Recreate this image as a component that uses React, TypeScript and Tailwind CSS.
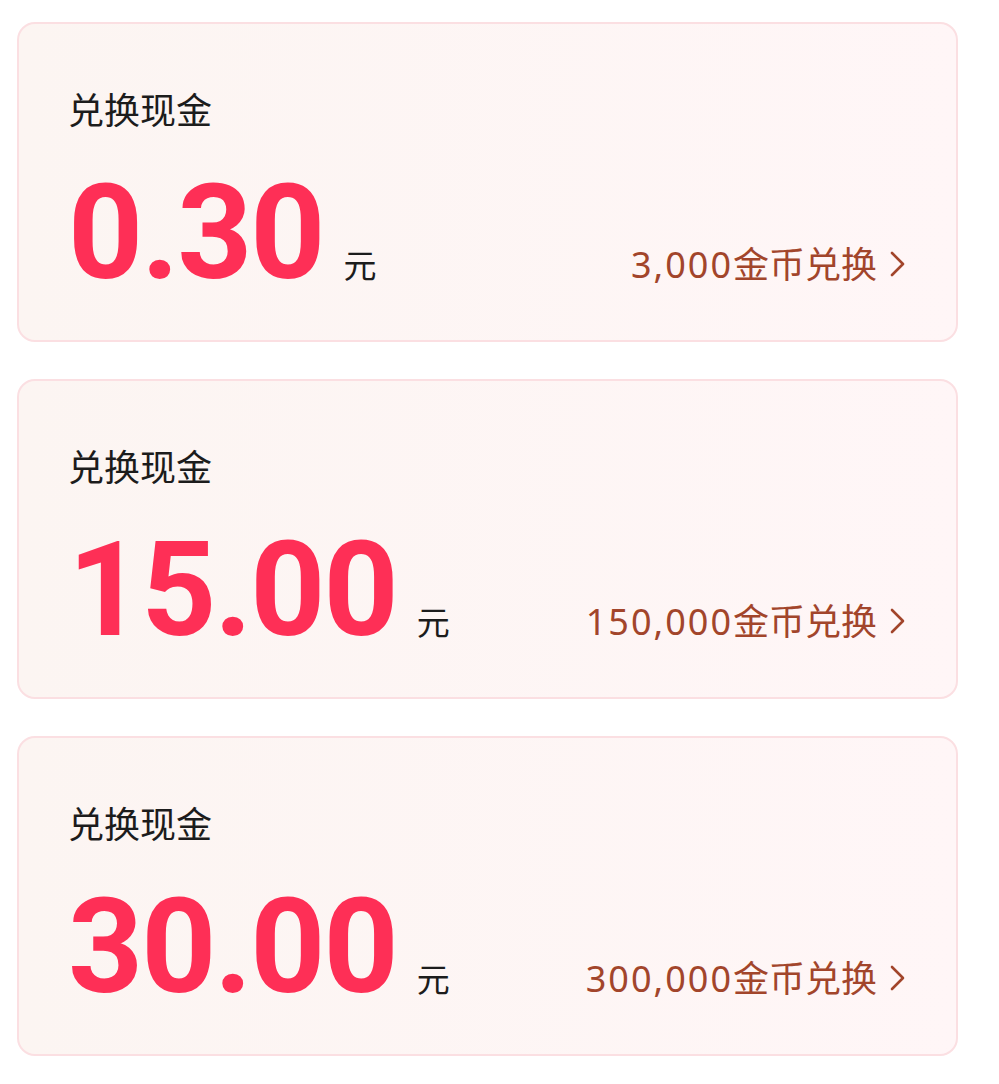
import React from "react";

const items = [
  { amount: "0.30", coins: "3,000" },
  { amount: "15.00", coins: "150,000" },
  { amount: "30.00", coins: "300,000" },
];

function Chevron() {
  return (
    <svg width="18" height="28" viewBox="0 0 18 28" className="ml-[12px] mb-[1px]" fill="none">
      <path d="M3 3 L14 14 L3 25" stroke="#a2452b" strokeWidth="2.6" strokeLinecap="round" strokeLinejoin="round" />
    </svg>
  );
}

export default function App() {
  return (
    <div className="min-h-[1084px] w-[999px] bg-white pt-[22px] pl-[17px] font-['Noto_Sans','Noto_Sans_CJK_SC',sans-serif]">
      <div className="flex w-[941px] flex-col gap-[37px]">
        {items.map((it) => (
          <div
            key={it.amount}
            className="box-border flex h-[320px] flex-col rounded-[18px] border-2 border-[#fbdfe2] bg-gradient-to-r from-[#fcf5f2] to-[#fff6f7] px-[49px] pt-[66px]"
          >
            <div className="font-['Noto_Sans_CJK_SC',sans-serif] text-[36px] leading-[36px] text-[#1c1c1c]">
              兑换现金
            </div>
            <div className="mt-[42px] flex items-baseline justify-between">
              <div className="flex items-baseline">
                <span className="font-['Roboto','DejaVu_Sans',sans-serif] text-[131px] font-bold leading-none tracking-[-2px] text-[#fe2f56]">
                  {it.amount}
                </span>
                <span className="ml-[20px] font-['Noto_Sans_CJK_SC',sans-serif] text-[33px] leading-none text-[#1c1c1c]">
                  元
                </span>
              </div>
              <div className="flex items-baseline text-[36px] leading-none text-[#a2452b]">
                <span className="font-['Noto_Sans',sans-serif] tracking-[2px]">{it.coins}</span>
                <span className="font-['Noto_Sans_CJK_SC',sans-serif]">金币兑换</span>
                <Chevron />
              </div>
            </div>
          </div>
        ))}
      </div>
    </div>
  );
}
